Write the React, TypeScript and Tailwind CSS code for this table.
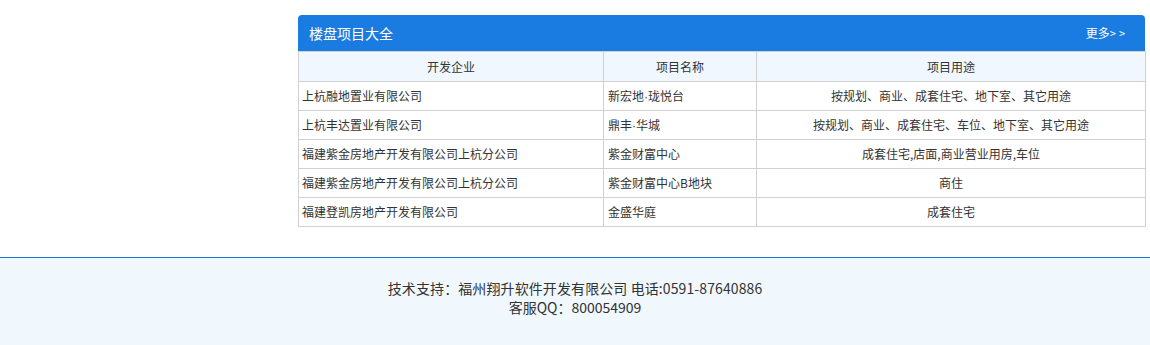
import React from "react";

const Dot = () => (
  <span style={{ fontFamily: '"Liberation Sans", Arial, sans-serif' }}>·</span>
);

const rows: [string, React.ReactNode, string][] = [
  ["上杭融地置业有限公司", <>新宏地<Dot />珑悦台</>, "按规划、商业、成套住宅、地下室、其它用途"],
  ["上杭丰达置业有限公司", <>鼎丰<Dot />华城</>, "按规划、商业、成套住宅、车位、地下室、其它用途"],
  ["福建紫金房地产开发有限公司上杭分公司", "紫金财富中心", "成套住宅,店面,商业营业用房,车位"],
  ["福建紫金房地产开发有限公司上杭分公司", "紫金财富中心B地块", "商住"],
  ["福建登凯房地产开发有限公司", "金盛华庭", "成套住宅"],
];

export default function App() {
  return (
    <div
      className="w-[1150px] h-[345px] overflow-hidden bg-white text-[#333]"
      style={{ fontFamily: '"Noto Sans CJK SC", "Noto Sans", sans-serif' }}
    >
      <div className="pt-[15px] pl-[298px]">
        <div className="w-[847px]">
          <div className="h-[36px] bg-[#1a7ce0] rounded-t-[4px] flex items-center justify-between pl-[11px] pr-[17px] text-white">
            <span className="text-[14px]">楼盘项目大全</span>
            <span className="text-[12px]">
              更多<span className="tracking-[3px] text-[11px]">&gt;&gt;</span>
            </span>
          </div>
          <table className="w-[847px] border-collapse table-fixed text-[12px]">
            <colgroup>
              <col className="w-[305px]" />
              <col className="w-[153px]" />
              <col className="w-[389px]" />
            </colgroup>
            <thead>
              <tr className="h-[30px] bg-[#f0f7fe]">
                <th className="border border-[#d0d0d0] font-normal text-center">开发企业</th>
                <th className="border border-[#d0d0d0] font-normal text-center">项目名称</th>
                <th className="border border-[#d0d0d0] font-normal text-center">项目用途</th>
              </tr>
            </thead>
            <tbody>
              {rows.map((r, i) => (
                <tr key={i} className="h-[29px]">
                  <td className="border border-[#d0d0d0] px-[3px] text-left">{r[0]}</td>
                  <td className="border border-[#d0d0d0] px-[4px] text-left">{r[1]}</td>
                  <td className="border border-[#d0d0d0] text-center">{r[2]}</td>
                </tr>
              ))}
            </tbody>
          </table>
        </div>
      </div>
      <div className="mt-[30px] border-t border-[#1a73d9] bg-[#f0f8fe] h-[100px] pt-[21px] text-center text-[14px] leading-[19px] text-[#333]">
        <div className="tracking-[0.1px]">技术支持：福州翔升软件开发有限公司 电话:0591-87640886</div>
        <div>客服QQ：800054909</div>
      </div>
    </div>
  );
}
